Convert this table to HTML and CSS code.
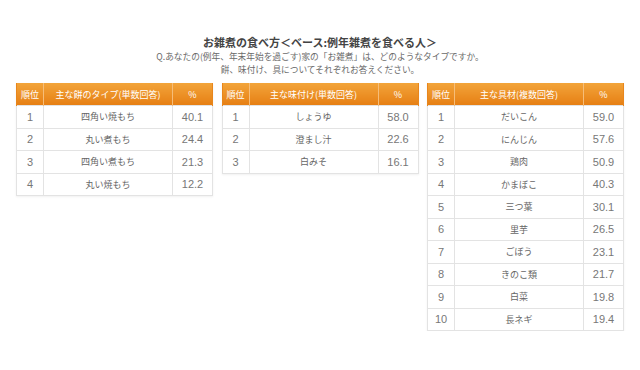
FILE: index.html
```html
<!DOCTYPE html>
<html lang="ja">
<head>
<meta charset="utf-8">
<link rel="stylesheet" href="styles.css">
</head>
<body>
<div class="page">
  <div class="intro">
    <h1 class="title">お雑煮の食べ方＜ベース:例年雑煮を食べる人＞</h1>
    <p class="lead">Q.あなたの(例年、年末年始を過ごす)家の「お雑煮」は、どのようなタイプですか。<br>餅、味付け、具についてそれぞれお答えください。</p>
  </div>
  <div class="tables">
    <table class="rank">
      <colgroup><col class="c-no"><col class="c-name"><col class="c-pct"></colgroup>
      <thead><tr><th>順位</th><th>主な餅のタイプ(単数回答)</th><th>%</th></tr></thead>
      <tbody>
        <tr><td>1</td><td>四角い焼もち</td><td>40.1</td></tr>
        <tr><td>2</td><td>丸い煮もち</td><td>24.4</td></tr>
        <tr><td>3</td><td>四角い煮もち</td><td>21.3</td></tr>
        <tr><td>4</td><td>丸い焼もち</td><td>12.2</td></tr>
      </tbody>
    </table>
    <table class="rank">
      <colgroup><col class="c-no"><col class="c-name"><col class="c-pct"></colgroup>
      <thead><tr><th>順位</th><th>主な味付け(単数回答)</th><th>%</th></tr></thead>
      <tbody>
        <tr><td>1</td><td>しょうゆ</td><td>58.0</td></tr>
        <tr><td>2</td><td>澄まし汁</td><td>22.6</td></tr>
        <tr><td>3</td><td>白みそ</td><td>16.1</td></tr>
      </tbody>
    </table>
    <table class="rank">
      <colgroup><col class="c-no"><col class="c-name"><col class="c-pct"></colgroup>
      <thead><tr><th>順位</th><th>主な具材(複数回答)</th><th>%</th></tr></thead>
      <tbody>
        <tr><td>1</td><td>だいこん</td><td>59.0</td></tr>
        <tr><td>2</td><td>にんじん</td><td>57.6</td></tr>
        <tr><td>3</td><td>鶏肉</td><td>50.9</td></tr>
        <tr><td>4</td><td>かまぼこ</td><td>40.3</td></tr>
        <tr><td>5</td><td>三つ葉</td><td>30.1</td></tr>
        <tr><td>6</td><td>里芋</td><td>26.5</td></tr>
        <tr><td>7</td><td>ごぼう</td><td>23.1</td></tr>
        <tr><td>8</td><td>きのこ類</td><td>21.7</td></tr>
        <tr><td>9</td><td>白菜</td><td>19.8</td></tr>
        <tr><td>10</td><td>長ネギ</td><td>19.4</td></tr>
      </tbody>
    </table>
  </div>
</div>
</body>
</html>
```

FILE: styles.css
```css
html, body {
  margin: 0;
  padding: 0;
  background: #ffffff;
}
body {
  font-family: "Noto Sans CJK JP", "Noto Sans", sans-serif;
  color: #555;
}
.page {
  width: 608px;
  margin: 0 auto;
  padding-top: 35px;
}
.intro {
  text-align: center;
}
.title {
  margin: 0;
  font-size: 11px;
  line-height: 15px;
  font-weight: bold;
  color: #444;
}
.lead {
  margin: 0;
  font-size: 8.7px;
  line-height: 13px;
  color: #6a6a6a;
}
.tables {
  display: flex;
  align-items: flex-start;
  justify-content: space-between;
  margin-top: 7px;
}
.rank {
  flex: 0 0 196px;
  width: 196px;
  border-collapse: collapse;
  table-layout: fixed;
  font-size: 9px;
  box-shadow: 0 1px 2px rgba(0,0,0,0.06);
}
.c-no { width: 27px; }
.c-name { width: 129px; }
.c-pct { width: 40px; }
.rank th {
  height: 22px;
  padding: 0;
  color: #fff;
  font-weight: normal;
  font-size: 9px;
  white-space: nowrap;
  overflow: hidden;
  background: linear-gradient(#f2a43a, #e67f14);
  border-left: 1px solid #f6bd78;
  text-align: center;
}
.rank th:first-child {
  border-left: 1px solid #e8861c;
}
.rank th:last-child {
  border-right: 1px solid #e8861c;
}
.rank td {
  height: 21.5px;
  padding: 0;
  border: 1px solid #e3e3e3;
  text-align: center;
  color: #666;
  background: #fff;
  overflow: hidden;
}
.rank td:first-child,
.rank td:last-child {
  font-family: "Liberation Sans", sans-serif;
  font-size: 11px;
  color: #777;
}
```
